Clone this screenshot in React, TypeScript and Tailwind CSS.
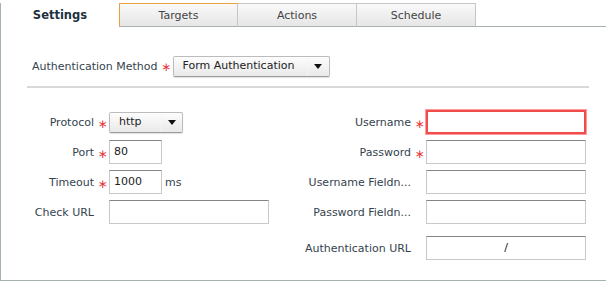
const TABS = ["Settings", "Targets", "Actions", "Schedule"];

function Star({ show = true }: { show?: boolean }) {
  return (
    <span className="w-[15px] shrink-0 pl-[2px] text-center text-[12px] leading-none text-[#e8383c] pt-[1px]">
      {show ? "∗" : ""}
    </span>
  );
}

function Caret() {
  return (
    <svg width="8" height="5" viewBox="0 0 8 5">
      <path d="M0 0h8L4 5z" fill="#111" />
    </svg>
  );
}

function Select({ value, width, arrowW }: { value: string; width: string; arrowW: string }) {
  return (
    <div
      className={`${width} h-[21px] flex items-stretch rounded-[2px] border border-[#bcbcbc] border-b-[#9c9c9c] bg-gradient-to-b from-[#fdfdfd] to-[#e9e9e9] shadow-[0_1px_1px_rgba(0,0,0,0.12)]`}
    >
      <div className="flex-1 flex items-center pl-[9px] pt-px text-[#222]">{value}</div>
      <div className={`${arrowW} flex items-center justify-center border-l border-[#f6f6f6]`}>
        <Caret />
      </div>
    </div>
  );
}

function Input({ width = "w-[160px]", value = "", center = false, error = false }: { width?: string; value?: string; center?: boolean; error?: boolean }) {
  return (
    <div
      className={`${width} h-[24px] flex items-center pt-px bg-white ${center ? "justify-center" : "pl-[4px]"} ${
        error
          ? "border-2 border-[#f04c4c] shadow-[0_0_0_1px_#ff9c9c]"
          : "border border-[#c9c9c9] border-t-[#858585]"
      } text-[#222]`}
    >
      {value}
    </div>
  );
}

function Row({ label, star, labelW, children }: { label: string; star: boolean; labelW: string; children: React.ReactNode }) {
  return (
    <div className="h-[24px] flex items-center">
      <div className={`${labelW} flex items-center justify-end pt-[2px]`}>
        <span>{label}</span>
        <Star show={star} />
      </div>
      {children}
    </div>
  );
}

export default function App() {
  return (
    <div className="w-[606px] h-[283px] overflow-hidden bg-white text-[11px] text-[#34434e] font-['DejaVu_Sans',sans-serif]">
      {/* Tab strip */}
      <div className="flex pt-[3px] h-[27px]">
        {TABS.map((t, i) => (
          <div
            key={t}
            className={`w-[119px] h-[24px] flex items-center justify-center pt-[2px] ${
              i === 0
                ? "bg-white border-l border-[#a7b2af] font-bold text-[#1d3140] text-[11.5px]"
                : `bg-gradient-to-b from-[#f9f9f9] to-[#e6e6e6] border-r border-b border-[#c6c6c6] border-b-[#a7b2af] text-[#444] ${
                    i === 1 ? "border-l border-t border-l-[#e8a23c] border-t-[#e8a23c]" : "border-t"
                  }`
            }`}
          >
            {t}
          </div>
        ))}
        <div className="flex-1 border-b border-[#a7b2af]" />
      </div>

      {/* Panel */}
      <div className="w-[620px] h-[254px] border-l border-b border-[#a7b2af]">
        <div className="flex items-center pl-[31px] pt-[28px] h-[50px]">
          <span className="pt-[2px]">Authentication Method</span>
          <Star />
          <Select value="Form Authentication" width="w-[157px]" arrowW="w-[22px]" />
        </div>

        <div className="ml-[26px] w-[562px] mt-[9px] border-t-2 border-[#d9d9d9]" />

        <div className="flex mt-[22px]">
          {/* left column */}
          <div className="w-[299px] flex flex-col gap-[6px]">
            <Row label="Protocol" star labelW="w-[108px]">
              <Select value="http" width="w-[74px]" arrowW="w-[21px]" />
            </Row>
            <Row label="Port" star labelW="w-[108px]">
              <Input width="w-[53px]" value="80" />
            </Row>
            <Row label="Timeout" star labelW="w-[108px]">
              <Input width="w-[53px]" value="1000" />
              <span className="ml-[3px] pt-[2px]">ms</span>
            </Row>
            <Row label="Check URL" star={false} labelW="w-[108px]">
              <Input />
            </Row>
          </div>

          {/* right column */}
          <div className="flex flex-col gap-[6px]">
            <Row label="Username" star labelW="w-[126px]">
              <Input error />
            </Row>
            <Row label="Password" star labelW="w-[126px]">
              <Input />
            </Row>
            <Row label="Username Fieldn..." star={false} labelW="w-[126px]">
              <Input />
            </Row>
            <Row label="Password Fieldn..." star={false} labelW="w-[126px]">
              <Input />
            </Row>
            <div className="mt-[6px]">
              <Row label="Authentication URL" star={false} labelW="w-[126px]">
                <Input value="/" center />
              </Row>
            </div>
          </div>
        </div>
      </div>
    </div>
  );
}
